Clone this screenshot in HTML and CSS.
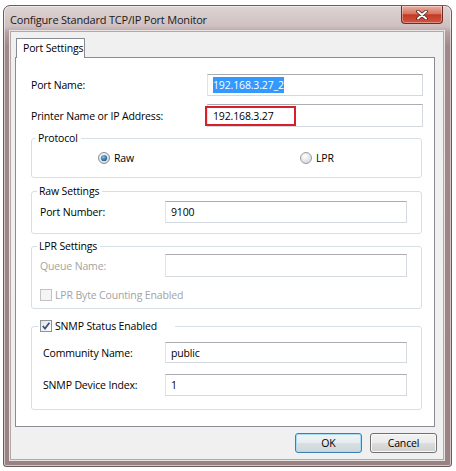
FILE: index.html
```html
<!DOCTYPE html>
<html>
<head>
<meta charset="utf-8">
<link rel="stylesheet" href="styles.css">
</head>
<body>
<div class="window">
  <div class="titlebar">
    <span class="title">Configure Standard TCP/IP Port Monitor</span>
    <div class="close">
      <svg width="12" height="10" viewBox="0 0 12 10"><path d="M2 1.5 L10 8.5 M10 1.5 L2 8.5" stroke="#4a2320" stroke-width="3.6" stroke-linecap="round"/><path d="M2 1.5 L10 8.5 M10 1.5 L2 8.5" stroke="#fff" stroke-width="2" stroke-linecap="round"/></svg>
    </div>
  </div>
  <div class="client">
    <div class="tabs"><div class="tab">Port Settings</div></div>
    <div class="panel">
      <div class="row r1">
        <span class="lbl lbl-top">Port Name:</span>
        <div class="field"><span class="sel">192.168.3.27_2</span></div>
      </div>
      <div class="row r2">
        <span class="lbl lbl-top">Printer Name or IP Address:</span>
        <div class="field field-hl"><span class="hl">192.168.3.27</span></div>
      </div>

      <div class="group g-proto">
        <div class="gtitle">Protocol</div>
        <div class="radios">
          <span class="radio radio-raw">
            <svg width="12" height="12" viewBox="0 0 12 12"><defs><radialGradient id="rg1" cx="0.4" cy="0.35" r="0.7"><stop offset="0" stop-color="#ffffff"/><stop offset="1" stop-color="#cfd3d6"/></radialGradient><radialGradient id="rd1" cx="0.4" cy="0.35" r="0.7"><stop offset="0" stop-color="#7cc4f0"/><stop offset="1" stop-color="#1b4f7d"/></radialGradient></defs><circle cx="6" cy="6" r="5.5" fill="url(#rg1)" stroke="#8a8f94"/><circle cx="6" cy="6" r="3.1" fill="url(#rd1)"/></svg>
            Raw
          </span>
          <span class="radio">
            <svg width="12" height="12" viewBox="0 0 12 12"><defs><radialGradient id="rg2" cx="0.4" cy="0.35" r="0.7"><stop offset="0" stop-color="#ffffff"/><stop offset="1" stop-color="#d3d5d7"/></radialGradient></defs><circle cx="6" cy="6" r="5.5" fill="url(#rg2)" stroke="#9a9ea2"/></svg>
            LPR
          </span>
        </div>
      </div>

      <div class="group g-raw">
        <div class="gtitle">Raw Settings</div>
        <div class="row grow">
          <span class="lbl lbl-grp">Port Number:</span>
          <div class="field">9100</div>
        </div>
      </div>

      <div class="group g-lpr">
        <div class="gtitle">LPR Settings</div>
        <div class="row grow queue">
          <span class="lbl lbl-grp disabled">Queue Name:</span>
          <div class="field"></div>
        </div>
        <div class="check-row disabled">
          <svg width="12" height="12" viewBox="0 0 12 12"><rect x="0.5" y="0.5" width="11" height="11" fill="#f4f4f4" stroke="#c3c3c3"/></svg>
          <span>LPR Byte Counting Enabled</span>
        </div>
      </div>

      <div class="group g-snmp">
        <div class="gtitle gtitle-snmp">
          <svg width="12" height="12" viewBox="0 0 12 12"><defs><linearGradient id="cb" x1="0" y1="0" x2="1" y2="1"><stop offset="0" stop-color="#dfe3e6"/><stop offset="1" stop-color="#ffffff"/></linearGradient></defs><rect x="0.5" y="0.5" width="11" height="11" fill="url(#cb)" stroke="#8e9296"/><path d="M2.8 6 L5 8.6 L9.4 2.8" fill="none" stroke="#3c4f7a" stroke-width="1.7"/></svg>
          <span>SNMP Status Enabled</span>
        </div>
        <div class="row grow comm">
          <span class="lbl lbl-snmp">Community Name:</span>
          <div class="field">public</div>
        </div>
        <div class="row grow idx">
          <span class="lbl lbl-snmp">SNMP Device Index:</span>
          <div class="field">1</div>
        </div>
      </div>
    </div>
    <div class="buttons">
      <button class="btn btn-default">OK</button>
      <button class="btn">Cancel</button>
    </div>
  </div>
</div>
</body>
</html>
```
FILE: styles.css
```css
html, body {
  margin: 0;
  padding: 0;
  background: #ffffff;
}
body {
  font-family: "Open Sans", "Noto Sans", sans-serif;
  font-size: 10.5px;
  letter-spacing: -0.15px;
  color: #000;
}
.window {
  margin: 5px 0 0 3px;
  width: 449px;
  height: 462px;
  box-sizing: border-box;
  border: 1px solid #6b5b5d;
  border-radius: 7px 7px 3px 3px;
  background: linear-gradient(to bottom, #ded4d4 0, #cfc0c1 20px, #b49fa1 27px, #9f898b 40px, #988284 100%);
  box-shadow: inset 0 0 0 1px rgba(255,255,255,0.55);
  padding: 0 7px 6px 6px;
  display: flex;
  flex-direction: column;
}
.titlebar {
  height: 25px;
  display: flex;
  justify-content: space-between;
  align-items: flex-start;
  flex-shrink: 0;
}
.title {
  font-size: 11px;
  letter-spacing: -0.2px;
  line-height: 15px;
  padding-top: 6px;
  color: #1a1a1a;
}
.close {
  width: 42px;
  height: 18px;
  box-sizing: border-box;
  margin-right: 1px;
  border: 1px solid #6a2f28;
  border-top: none;
  border-radius: 0 0 4px 4px;
  background: linear-gradient(to bottom, #eab0a4 0%, #d9735f 45%, #c43a24 52%, #cf5640 100%);
  box-shadow: inset 0 0 0 1px rgba(255,255,255,0.35);
  display: flex;
  align-items: center;
  justify-content: center;
}
.client {
  flex: 1;
  background: #f0f0f0;
  border: 1px solid #b3a7a8;
  box-shadow: 0 0 0 1px #e9e2e2;
  padding: 6px 8px 6px 4px;
  display: flex;
  flex-direction: column;
}
.tabs {
  display: flex;
  height: 19px;
}
.tab {
  position: relative;
  z-index: 1;
  margin-left: 1px;
  width: 69px;
  height: 20px;
  box-sizing: border-box;
  border: 1px solid #898c95;
  border-bottom: none;
  background: #fff;
  padding-left: 6px;
  line-height: 18px;
  white-space: nowrap;
}
.panel {
  height: 370px;
  box-sizing: border-box;
  border: 1px solid #898c95;
  background: #fff;
  padding: 16px 11px 0 15px;
  display: flex;
  flex-direction: column;
}
.row {
  display: flex;
  align-items: center;
}
.r1 { height: 22px; }
.r2 { height: 23px; margin-top: 8px; }
.lbl { white-space: nowrap; }
.lbl-top { width: 176px; flex-shrink: 0; }
.lbl-grp { width: 125px; flex-shrink: 0; }
.lbl-snmp { width: 122px; flex-shrink: 0; }
.disabled { color: #a3a3a3; }
.field {
  flex: 1;
  align-self: stretch;
  box-sizing: border-box;
  border: 1px solid #d3d9df;
  border-top-color: #abadb3;
  border-left-color: #e2e3ea;
  background: #fff;
  display: flex;
  align-items: center;
  padding-left: 5px;
}
.sel {
  background: #3399ff;
  color: #fff;
  line-height: 16px;
}
.field-hl { padding-left: 0; }
.hl {
  margin-left: -3px;
  width: 91px;
  height: 20px;
  box-sizing: border-box;
  border: 2px solid #d81f2a;
  padding-left: 6px;
  line-height: 16px;
}
.group {
  border: 1px solid #d5dfe5;
  border-radius: 3px;
  margin-right: 1px;
  padding: 0 14px 0 8px;
  display: flex;
  flex-direction: column;
}
.gtitle {
  align-self: flex-start;
  background: #fff;
  line-height: 14px;
  margin-top: -8px;
  padding: 0 3px 0 2px;
  white-space: nowrap;
}
.g-proto { margin-top: 11px; padding-bottom: 11px; }
.g-proto .gtitle { margin-left: -4px; }
.radios {
  display: flex;
  align-items: center;
  height: 16px;
  margin-top: 5px;
}
.radio {
  display: flex;
  align-items: center;
  gap: 4px;
}
.radio-raw {
  margin-left: 58px;
  width: 202px;
}
.g-raw { margin-top: 13px; padding-bottom: 10px; }
.g-raw .gtitle { margin-left: -3px; }
.grow { height: 22px; }
.g-raw .grow { margin-top: 3px; }
.g-lpr { margin-top: 12px; padding-bottom: 5px; }
.g-lpr .gtitle { margin-left: -3px; }
.queue { margin-top: 1px; height: 23px; }
.check-row {
  display: flex;
  align-items: center;
  gap: 3px;
  height: 16px;
  margin-top: 10px;
}
.g-snmp { margin-top: 17px; padding-left: 11px; padding-bottom: 13px; }
.gtitle-snmp {
  display: flex;
  align-items: center;
  gap: 3px;
  margin-left: -5px;
  padding-right: 18px;
}
.comm { margin-top: 9px; height: 21px; }
.idx { margin-top: 11px; }
.buttons {
  display: flex;
  justify-content: flex-end;
  gap: 8px;
  margin-top: 6px;
  margin-right: -2px;
}
.btn {
  width: 67px;
  height: 20px;
  box-sizing: border-box;
  border: 1px solid #707070;
  border-radius: 3px;
  background: linear-gradient(to bottom, #f2f2f2 0%, #ebebeb 50%, #dddddd 51%, #cfcfcf 100%);
  box-shadow: inset 0 0 0 1px #fbfbfb;
  font-family: "Open Sans", "Noto Sans", sans-serif;
  font-size: 10.5px;
  letter-spacing: -0.15px;
  color: #000;
  padding: 0;
}
.btn-default {
  border-color: #3c7fb1;
  background: linear-gradient(to bottom, #f0f4f6 0%, #e6ecef 50%, #d8e0e4 51%, #cdd6db 100%);
  box-shadow: inset 0 0 0 1px #a8dcf5;
}
```
